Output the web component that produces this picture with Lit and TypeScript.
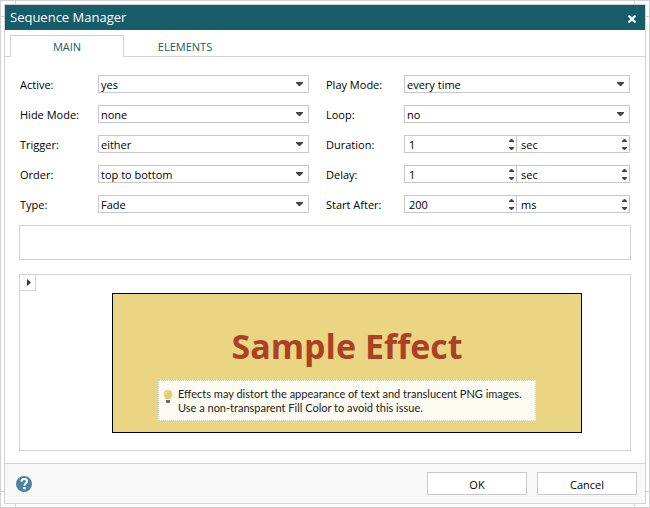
import { LitElement, css, html, svg } from "lit";
import { customElement, property, state } from "lit/decorators.js";
import { classMap } from "lit/directives/class-map.js";

const controlStyles = css`
  * {
    box-sizing: border-box;
  }
  .field {
    display: grid;
    grid-template-columns: 78px 1fr;
    align-items: center;
    height: 18px;
  }
  .label {
    line-height: 16px;
    padding-top: 2px;
  }
  .input,
  .select {
    appearance: none;
    font: inherit;
    color: #000;
    background: #fff;
    border: 1px solid #c8c8c8;
    border-radius: 0;
    outline: none;
    width: 100%;
    min-width: 0;
    height: 18px;
    margin: 0;
  }
`;

@customElement("select-field")
export class SelectField extends LitElement {
  @property() label = "";
  @property() value = "";
  @property({ attribute: false }) options: string[] = [];

  static styles = [
    controlStyles,
    css`
      :host {
        display: block;
      }
      .box {
        display: grid;
        align-items: center;
      }
      .box > * {
        grid-area: 1 / 1;
      }
      .select {
        padding: 2px 20px 0 2px;
        line-height: 14px;
      }
      .arrow {
        justify-self: end;
        margin-right: 6px;
        pointer-events: none;
      }
    `,
  ];

  render() {
    return html`
      <div class="field">
        <label class="label" for="control">${this.label}</label>
        <div class="box">
          <select class="select" id="control">
            ${this.options.map(
              (o) => html`<option ?selected=${o === this.value}>${o}</option>`
            )}
          </select>
          <svg class="arrow" width="7" height="4" viewBox="0 0 7 4" aria-hidden="true">
            <path d="M0 0h7v1L4 4H3L0 1z" fill="#444" />
          </svg>
        </div>
      </div>
    `;
  }
}

@customElement("time-field")
export class TimeField extends LitElement {
  @property() label = "";
  @property({ type: Number }) amount = 0;
  @property() unit = "sec";

  static styles = [
    controlStyles,
    css`
      :host {
        display: block;
      }
      .pair {
        display: grid;
        grid-template-columns: 1fr 1fr;
      }
      .spin {
        display: grid;
      }
      .spin > * {
        grid-area: 1 / 1;
      }
      .spin + .spin .input {
        border-left: 0;
      }
      .input {
        padding: 0 14px 0 4px;
      }
      .input::-webkit-inner-spin-button {
        appearance: none;
      }
      .steps {
        justify-self: end;
        display: flex;
        flex-direction: column;
        padding: 1px 1px 1px 0;
      }
      .step {
        display: flex;
        align-items: center;
        justify-content: center;
        width: 9px;
        height: 8px;
        padding: 0;
        border: 0;
        background: none;
      }
    `,
  ];

  private bump(by: number) {
    this.amount = Math.max(0, this.amount + by);
  }

  private swap() {
    this.unit = this.unit === "sec" ? "ms" : "sec";
  }

  private steps(name: string, up: () => void, down: () => void) {
    return html`
      <span class="steps">
        <button class="step" aria-label="${name} up" @click=${up}>
          <svg width="5" height="3" viewBox="0 0 5 3"><path d="M2 0h1l2 2v1H0V2z" fill="#444" /></svg>
        </button>
        <button class="step" aria-label="${name} down" @click=${down}>
          <svg width="5" height="3" viewBox="0 0 5 3"><path d="M0 0h5v1L3 3H2L0 1z" fill="#444" /></svg>
        </button>
      </span>
    `;
  }

  render() {
    return html`
      <div class="field">
        <label class="label" for="amount">${this.label}</label>
        <div class="pair">
          <div class="spin">
            <input class="input" id="amount" type="number" .value=${String(this.amount)} />
            ${this.steps(this.label, () => this.bump(1), () => this.bump(-1))}
          </div>
          <div class="spin">
            <input class="input" aria-label="${this.label} unit" .value=${this.unit} />
            ${this.steps("Unit", () => this.swap(), () => this.swap())}
          </div>
        </div>
      </div>
    `;
  }
}

const bulb = svg`
  <path d="M5 0C2 0 .6 2 .6 4.200c0 2 1.400 2.600 1.700 4.800h5.400C8 6.800 9.400 6.200 9.400 4.200 9.400 2 8 0 5 0z" fill="#e6cf72"/>
  <path d="M2.500 3.600a1.500 1.500 0 0 1 1.500-1.500" stroke="#fff" stroke-width=".8" fill="none"/>
  <path d="M3 10h4v2L6 13H4L3 12z" fill="#666a70"/>`;

@customElement("app-root")
export class AppRoot extends LitElement {
  @state() private tab = "MAIN";

  static styles = css`
    :host {
      display: block;
      font-family: "Open Sans", "Noto Sans", sans-serif;
      font-size: 11px;
      line-height: 14px;
      color: #000;
    }
    * {
      box-sizing: border-box;
    }
    .page {
      padding: 3px;
      border: 1px solid #d2d2d2;
      background:
        linear-gradient(#d2d2d2, #d2d2d2) 14px 0 / 1px 100% no-repeat,
        linear-gradient(#d2d2d2, #d2d2d2) right 14px top 0 / 1px 100% no-repeat,
        linear-gradient(#d2d2d2, #d2d2d2) 0 15px / 100% 1px no-repeat,
        linear-gradient(#d2d2d2, #d2d2d2) 0 calc(100% - 15px) / 100% 1px no-repeat,
        #fff;
    }
    .dialog {
      border: 1px solid #d2d2d2;
      background: #fff;
    }
    .header {
      display: flex;
      align-items: center;
      justify-content: space-between;
      height: 25px;
      padding: 0 8px 0 5px;
      background: #165d69;
      color: #fff;
    }
    .title {
      margin: 0;
      font-size: 13px;
      font-weight: 400;
      line-height: 25px;
    }
    .close {
      display: flex;
      padding: 2px 0 0;
      border: 0;
      background: none;
    }
    .tabs {
      display: flex;
      padding: 5px 5px 0;
      box-shadow: inset 0 -1px #d2d2d2;
    }
    .tab {
      width: 114px;
      height: 22px;
      padding: 0;
      border: 1px solid transparent;
      border-bottom: 0;
      background: none;
      color: #165d69;
      font: inherit;
    }
    .tab:not(.current) {
      width: 122px;
    }
    .current {
      border-color: #d2d2d2;
      background: #fff;
    }
    .content {
      display: flex;
      flex-direction: column;
      padding: 18px 14px 12px;
    }
    .form {
      display: grid;
      grid-template-columns: 289fr 304fr;
      gap: 12px 17px;
      padding: 0 1px;
    }
    .message {
      height: 35px;
      margin: 12px 0 14px;
      border: 1px solid #d2d2d2;
    }
    .preview {
      display: grid;
      grid-template-columns: 16px 1fr;
      border: 1px solid #d2d2d2;
    }
    .play {
      display: flex;
      align-items: center;
      justify-content: end;
      width: 16px;
      height: 16px;
      padding: 0 4px 0 0;
      border: solid #d2d2d2;
      border-width: 0 1px 1px 0;
      background: #fff;
    }
    .canvas {
      min-height: 140px;
      margin: 18px 48px 17px 76px;
      padding: 30px 45px 11px 45px;
      border: 1px solid #000;
      background: #ead682;
    }
    .sample {
      margin: 0 0 12px;
      color: #ac4025;
      font-size: 34px;
      font-weight: 700;
      line-height: 44px;
      text-align: center;
    }
    .tip {
      display: flex;
      gap: 5px;
      padding: 6px 4px 5px;
      border: 1px dotted #d2d2d2;
      background: #fcfbf2;
      color: #222;
      font-family: Lato, "Open Sans", sans-serif;
    }
    .tip p {
      margin: 0;
    }
    .bulb {
      flex: none;
      margin-top: 3px;
    }
    .footer {
      display: flex;
      align-items: center;
      gap: 10px;
      height: 40px;
      padding: 0 8px 0 11px;
      border-top: 1px solid #d2d2d2;
      background: #f8f8f8;
    }
    .help {
      display: flex;
      margin-right: auto;
      padding: 0;
      border: 0;
      background: none;
    }
    .button {
      width: 100px;
      height: 23px;
      padding: 2px 0 0;
      border: 1px solid #c8c8c8;
      background: #fff;
      color: #000;
      font: inherit;
    }
  `;

  private renderTab(name: string) {
    const current = this.tab === name;
    return html`<button
      class=${classMap({ tab: true, current })}
      role="tab"
      aria-selected=${current}
      @click=${() => (this.tab = name)}
    >${name}</button>`;
  }

  render() {
    return html`
      <div class="page">
        <div class="dialog" role="dialog" aria-labelledby="title">
          <header class="header">
            <h1 class="title" id="title">Sequence Manager</h1>
            <button class="close" aria-label="Close">
              <svg width="10" height="8" viewBox="0 0 10 8">
                <path d="M1.500 .5L8.500 7.500M8.500 .5L1.500 7.500" stroke="#fff" stroke-width="2.200" />
              </svg>
            </button>
          </header>
          <div class="tabs" role="tablist">
            ${this.renderTab("MAIN")}${this.renderTab("ELEMENTS")}
          </div>
          <main class="content">
            <div class="form">
              <select-field label="Active:" value="yes" .options=${["yes", "no"]}></select-field>
              <select-field label="Play Mode:" value="every time" .options=${["every time", "once"]}></select-field>
              <select-field label="Hide Mode:" value="none" .options=${["none"]}></select-field>
              <select-field label="Loop:" value="no" .options=${["yes", "no"]}></select-field>
              <select-field label="Trigger:" value="either" .options=${["either"]}></select-field>
              <time-field label="Duration:" amount="1" unit="sec"></time-field>
              <select-field label="Order:" value="top to bottom" .options=${["top to bottom", "bottom to top"]}></select-field>
              <time-field label="Delay:" amount="1" unit="sec"></time-field>
              <select-field label="Type:" value="Fade" .options=${["Fade"]}></select-field>
              <time-field label="Start After:" amount="200" unit="ms"></time-field>
            </div>
            <div class="message"></div>
            <section class="preview">
              <button class="play" aria-label="Play">
                <svg width="4" height="7" viewBox="0 0 4 7"><path d="M0 0l4 3.500L0 7z" fill="#333" /></svg>
              </button>
              <div class="canvas">
                <h2 class="sample">Sample Effect</h2>
                <div class="tip">
                  <svg class="bulb" width="10" height="13" viewBox="0 0 10 13" aria-hidden="true">${bulb}</svg>
                  <p>
                    Effects may distort the appearance of text and translucent PNG images.<br />
                    Use a non-transparent Fill Color to avoid this issue.
                  </p>
                </div>
              </div>
            </section>
          </main>
          <footer class="footer">
            <button class="help" aria-label="Help">
              <svg width="16" height="16" viewBox="0 0 16 16">
                <circle cx="8" cy="8" r="8" fill="#4e83a3" />
                <path d="M5.300 5.600C5.500 3.700 6.600 3 8.200 3c1.700 0 2.800.9 2.800 2.300C11 7.300 8.500 7.400 8.500 9.800" fill="none" stroke="#fff" stroke-width="2" />
                <path d="M7.300 11h2.300v2.300H7.300z" fill="#fff" />
              </svg>
            </button>
            <button class="button">OK</button>
            <button class="button">Cancel</button>
          </footer>
        </div>
      </div>
    `;
  }
}
